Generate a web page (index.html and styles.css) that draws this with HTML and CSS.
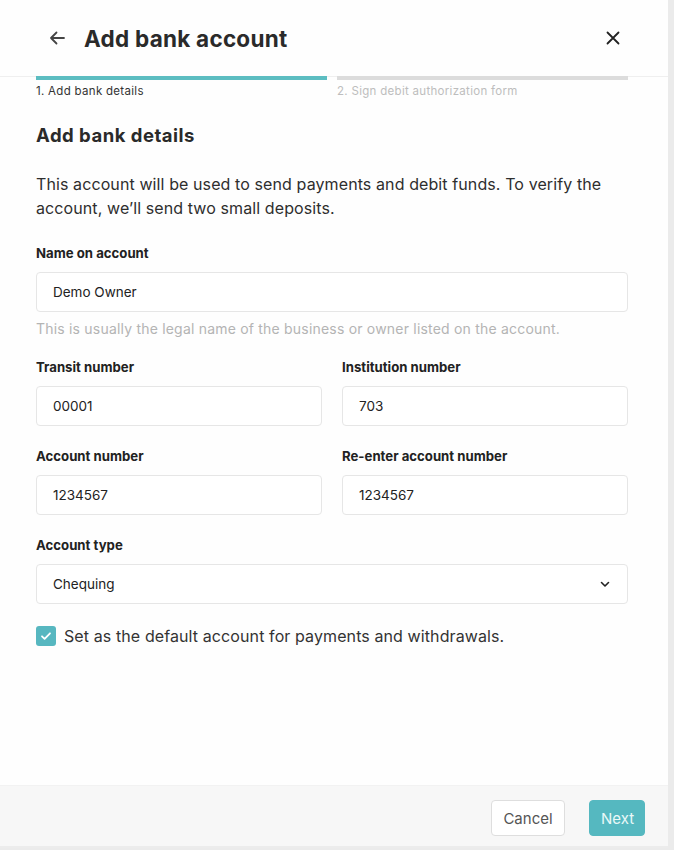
FILE: index.html
```html
<!DOCTYPE html>
<html>
<head>
<meta charset="utf-8">
<link rel="stylesheet" href="styles.css">
</head>
<body>
<div class="modal">
  <header class="head">
    <div class="head-left">
      <svg class="back" width="20" height="20" viewBox="0 0 20 20"><path d="M17 10H4M9.5 4.5L4 10l5.5 5.5" fill="none" stroke="#444" stroke-width="1.8" stroke-linecap="round" stroke-linejoin="round"/></svg>
      <h1 class="title">Add bank account</h1>
    </div>
    <svg class="close" width="16" height="16" viewBox="0 0 16 16"><path d="M2.5 2.5l11 11M13.5 2.5l-11 11" stroke="#222" stroke-width="1.8" stroke-linecap="round"/></svg>
  </header>
  <div class="steps">
    <div class="step active"><div class="bar"></div><span>1. Add bank details</span></div>
    <div class="step"><div class="bar"></div><span>2. Sign debit authorization form</span></div>
  </div>
  <main class="body">
    <h2 class="section">Add bank details</h2>
    <p class="intro">This account will be used to send payments and debit funds. To verify the account, we’ll send two small deposits.</p>
    <div class="field first">
      <label>Name on account</label>
      <div class="input">Demo Owner</div>
      <div class="help">This is usually the legal name of the business or owner listed on the account.</div>
    </div>
    <div class="grid">
      <div class="field"><label>Transit number</label><div class="input">00001</div></div>
      <div class="field"><label>Institution number</label><div class="input">703</div></div>
      <div class="field row2"><label>Account number</label><div class="input">1234567</div></div>
      <div class="field row2"><label>Re-enter account number</label><div class="input">1234567</div></div>
    </div>
    <div class="field type">
      <label>Account type</label>
      <div class="input select">Chequing
        <svg width="12" height="12" viewBox="0 0 12 12"><path d="M2.5 4.5L6 8l3.5-3.5" fill="none" stroke="#222" stroke-width="1.6" stroke-linecap="round" stroke-linejoin="round"/></svg>
      </div>
    </div>
    <div class="check">
      <span class="box"><svg width="14" height="14" viewBox="0 0 14 14"><path d="M3 7.3l2.6 2.6L11 4.3" fill="none" stroke="#fff" stroke-width="1.8" stroke-linecap="round" stroke-linejoin="round"/></svg></span>
      <span>Set as the default account for payments and withdrawals.</span>
    </div>
  </main>
  <footer class="foot">
    <button class="btn cancel">Cancel</button>
    <button class="btn next">Next</button>
  </footer>
</div>
</body>
</html>
```
FILE: styles.css
```css
* { box-sizing: border-box; }
html, body { margin: 0; padding: 0; }
body {
  width: 674px;
  height: 850px;
  background: #ebebeb;
  font-family: "Inter", "Liberation Sans", sans-serif;
  color: #222;
  overflow: hidden;
}
.modal {
  width: 668px;
  height: 848px;
  background: #fefefe;
  display: flex;
  flex-direction: column;
}
.head {
  height: 77px;
  flex: none;
  display: flex;
  align-items: center;
  justify-content: space-between;
  padding: 0 47px 0 47px;
  border-bottom: 1px solid #efefef;
}
.head-left { display: flex; align-items: center; gap: 17px; }
.back { display: block; }
.close { display: block; }
.title {
  margin: 0;
  font-size: 22.5px;
  font-weight: 700;
  color: #2a2a2a;
  letter-spacing: 0.25px;
}
.steps {
  display: flex;
  gap: 10px;
  padding: 0 40px 0 36px;
  margin-top: -1px;
}
.step { flex: 1; }
.step .bar { height: 4px; background: #dcdcdc; }
.step.active .bar { background: #5cbdc1; }
.step span {
  display: block;
  font-size: 11.5px;
  color: #bdbdbd;
  margin-top: 4px;
  letter-spacing: 0.3px;
}
.step.active span { color: #333; }
.body { flex: 1; padding: 25px 40px 0 36px; }
.section {
  margin: 0;
  font-size: 18.5px;
  font-weight: 700;
  color: #2a2a2a;
  line-height: 24px;
  letter-spacing: 0.5px;
}
.intro {
  margin: 25px 0 0;
  font-size: 16px;
  line-height: 24px;
  color: #2e2e2e;
  letter-spacing: 0.1px;
}
.field { margin-top: 22px; }
.field.first { margin-top: 25px; }
.field label {
  display: block;
  font-size: 13.2px;
  font-weight: 700;
  color: #222;
  line-height: 16px;
  margin-bottom: 11px;
}
.input {
  height: 40px;
  border: 1px solid #e6e6e6;
  border-radius: 4px;
  background: #fff;
  display: flex;
  align-items: center;
  padding: 0 16px;
  font-size: 13.5px;
  color: #222;
}
.help {
  margin-top: 9px;
  font-size: 14px;
  color: #b4b4b4;
  line-height: 16px;
  letter-spacing: 0.2px;
}
.grid {
  display: grid;
  grid-template-columns: 1fr 1fr;
  column-gap: 20px;
}
.grid .field { margin-top: 22px; }
.grid .field.row2 { margin-top: 22px; }
.field.type { margin-top: 22px; }
.select { justify-content: space-between; }
.check {
  margin-top: 22px;
  display: flex;
  align-items: center;
  gap: 8px;
  font-size: 16px;
  color: #333;
  letter-spacing: 0.1px;
}
.box {
  width: 20px;
  height: 20px;
  border-radius: 3px;
  background: #57b7c0;
  display: flex;
  align-items: center;
  justify-content: center;
}
.foot {
  height: 63px;
  flex: none;
  background: #f7f7f7;
  border-top: 1px solid #f2f2f2;
  border-bottom: 2px solid #ececec;
  display: flex;
  justify-content: flex-end;
  align-items: center;
  gap: 24px;
  padding: 4px 23px 0 0;
}
.btn {
  height: 36px;
  border-radius: 4px;
  font-family: inherit;
  font-size: 15px;
  padding: 0 11px;
}
.cancel {
  width: 74px;
  background: #fff;
  border: 1px solid #dedede;
  color: #555;
}
.next {
  width: 56px;
  background: #55b8c0;
  border: 1px solid #55b8c0;
  color: #eaf8f8;
}
```
